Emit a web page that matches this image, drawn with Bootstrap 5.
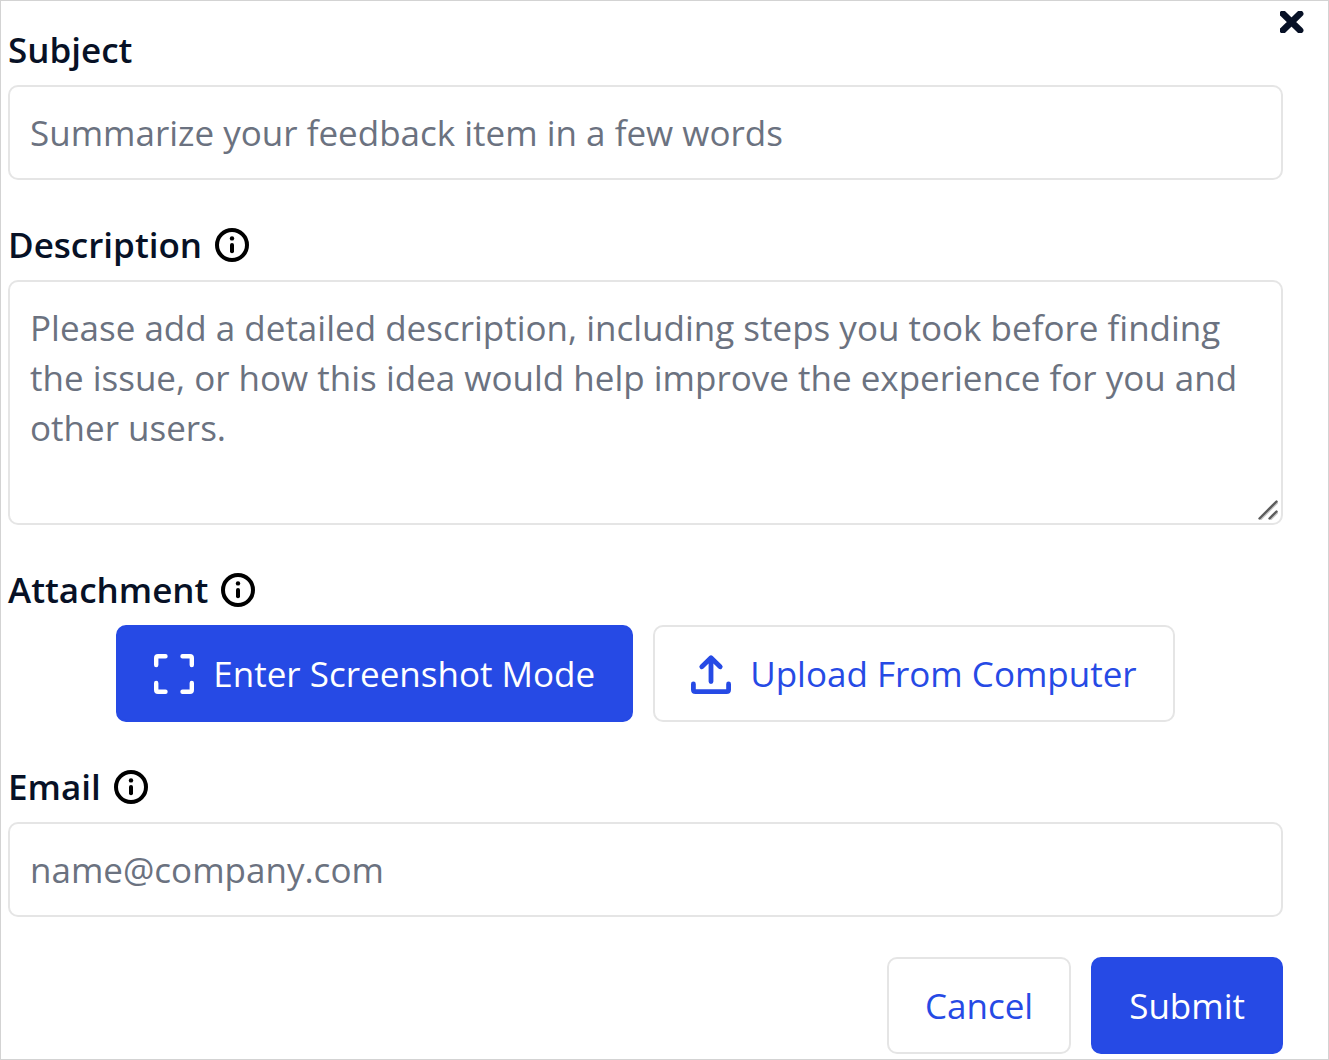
<!DOCTYPE html>
<html lang="en">
<head>
<meta charset="utf-8">
<meta name="viewport" content="width=device-width, initial-scale=1">
<title>Feedback</title>
<link href="https://cdn.jsdelivr.net/npm/bootstrap@5.3.0/dist/css/bootstrap.min.css" rel="stylesheet">
<style>
  body { font-family: "Open Sans", "Noto Sans", sans-serif; font-size: 35px; line-height: 50px; color: #071126; background: #fff; }
  .feedback-panel { min-height: 100vh; border: 1px solid #d3d3d3; padding: 24px 45px 5px 7px; }
  .feedback-form { gap: 40px; }
  .field-label { font-weight: 600; line-height: 50px; }
  .field-head { gap: 13px; margin-bottom: 10px; }
  .info-btn { color: #000; line-height: 0; }
  .feedback-form .form-control { font-size: 35px; line-height: 50px; padding: 21px 20px 20px; border: 2px solid #e5e5e5; border-radius: 10px; color: #071126; }
  .feedback-form .form-control::placeholder { color: #6b7280; opacity: 1; }
  .feedback-form textarea.form-control { resize: none; }
  .feedback-form .btn { font-size: 35px; line-height: 50px; padding: 22px 36px 21px; border-width: 2px; border-radius: 10px; }
  .btn-solid { --bs-btn-color: #fff; --bs-btn-bg: #264ae5; --bs-btn-border-color: #264ae5; --bs-btn-hover-color: #fff; --bs-btn-hover-bg: #1d3cc4; --bs-btn-hover-border-color: #1d3cc4; }
  .btn-line { --bs-btn-color: #264ae5; --bs-btn-bg: #fff; --bs-btn-border-color: #e5e5e5; --bs-btn-hover-color: #1d3cc4; --bs-btn-hover-bg: #f7f8fe; --bs-btn-hover-border-color: #e5e5e5; }
  .btn-gap { gap: 20px; }
  .btn-inner { gap: 19px; }
  .close-btn { top: 11px; right: 25px; line-height: 0; color: #071126; }
  .grip { right: 5px; bottom: 5px; pointer-events: none; }
</style>
</head>
<body>
<main class="feedback-panel">
  <button type="button" class="close-btn position-absolute border-0 bg-transparent p-0" aria-label="Close">
    <svg width="24" height="22" viewBox="0 0 24 22" fill="none" stroke="currentColor" stroke-width="6.600" stroke-linecap="round"><path d="M2.900 2.700 20.100 19.300M20.100 2.700 2.900 19.300"/></svg>
  </button>
  <form class="feedback-form d-flex flex-column">
    <div>
      <div class="field-head d-flex align-items-center"><label class="field-label" for="subject">Subject</label></div>
      <input id="subject" type="text" class="form-control" placeholder="Summarize your feedback item in a few words">
    </div>
    <div>
      <div class="field-head d-flex align-items-center">
        <label class="field-label" for="description">Description</label>
        <button type="button" class="info-btn border-0 bg-transparent p-0" aria-label="About the description">
          <svg width="34" height="34" viewBox="0 0 34 34" fill="none" stroke="currentColor" stroke-width="4" stroke-linecap="round"><circle cx="17" cy="17" r="15"/><path d="M17 17v6.200"/><circle cx="17" cy="10.400" r="2.200" fill="currentColor" stroke="none"/></svg>
        </button>
      </div>
      <div class="position-relative">
        <textarea id="description" class="form-control d-block" rows="4" placeholder="Please add a detailed description, including steps you took before finding the issue, or how this idea would help improve the experience for you and other users."></textarea>
        <svg class="grip position-absolute" width="20" height="20" viewBox="0 0 20 20" fill="none" stroke-linecap="round"><path d="M3 19 19.500 2.500M13 19 19.500 12.500" stroke="#c8c8c8" stroke-width="2"/><path d="M1.500 18.500 18.500 1.500M11.500 18.500 18.500 11.500" stroke="#5c5c5c" stroke-width="2.400"/></svg>
      </div>
    </div>
    <div role="group" aria-labelledby="attachment-label">
      <div class="field-head d-flex align-items-center">
        <span class="field-label" id="attachment-label">Attachment</span>
        <button type="button" class="info-btn border-0 bg-transparent p-0" aria-label="About attachments">
          <svg width="34" height="34" viewBox="0 0 34 34" fill="none" stroke="currentColor" stroke-width="4" stroke-linecap="round"><circle cx="17" cy="17" r="15"/><path d="M17 17v6.200"/><circle cx="17" cy="10.400" r="2.200" fill="currentColor" stroke="none"/></svg>
        </button>
      </div>
      <div class="d-flex flex-wrap justify-content-center btn-gap">
        <button type="button" class="btn btn-solid btn-inner d-flex align-items-center">
          <svg width="40" height="40" viewBox="0 0 40 40" fill="none" stroke="currentColor" stroke-width="4.400" stroke-linecap="round" stroke-linejoin="round"><path d="M2.200 11V4Q2.200 2.200 4 2.200H11.500M28.500 2.200H36Q37.800 2.200 37.800 4V11M37.800 29V36Q37.800 37.800 36 37.800H28.500M11.500 37.800H4Q2.200 37.800 2.200 36V29"/></svg>
          Enter Screenshot Mode
        </button>
        <button type="button" class="btn btn-line btn-inner d-flex align-items-center">
          <svg width="40" height="40" viewBox="0 0 40 40" fill="none" stroke="currentColor" stroke-width="4.800" stroke-linecap="round" stroke-linejoin="round"><path d="M2.400 30V35.500Q2.400 37.600 4.500 37.600H35.500Q37.600 37.600 37.600 35.500V30M20 27.500V4M10.800 12.800 20 3.800 29.200 12.800"/></svg>
          Upload From Computer
        </button>
      </div>
    </div>
    <div>
      <div class="field-head d-flex align-items-center">
        <label class="field-label" for="email">Email</label>
        <button type="button" class="info-btn border-0 bg-transparent p-0" aria-label="About the email">
          <svg width="34" height="34" viewBox="0 0 34 34" fill="none" stroke="currentColor" stroke-width="4" stroke-linecap="round"><circle cx="17" cy="17" r="15"/><path d="M17 17v6.200"/><circle cx="17" cy="10.400" r="2.200" fill="currentColor" stroke="none"/></svg>
        </button>
      </div>
      <input id="email" type="email" class="form-control" placeholder="name@company.com">
    </div>
    <div class="d-flex justify-content-end btn-gap">
      <button type="button" class="btn btn-line">Cancel</button>
      <button type="submit" class="btn btn-solid">Submit</button>
    </div>
  </form>
</main>
<script src="https://cdn.jsdelivr.net/npm/bootstrap@5.3.0/dist/js/bootstrap.bundle.min.js"></script>
</body>
</html>
